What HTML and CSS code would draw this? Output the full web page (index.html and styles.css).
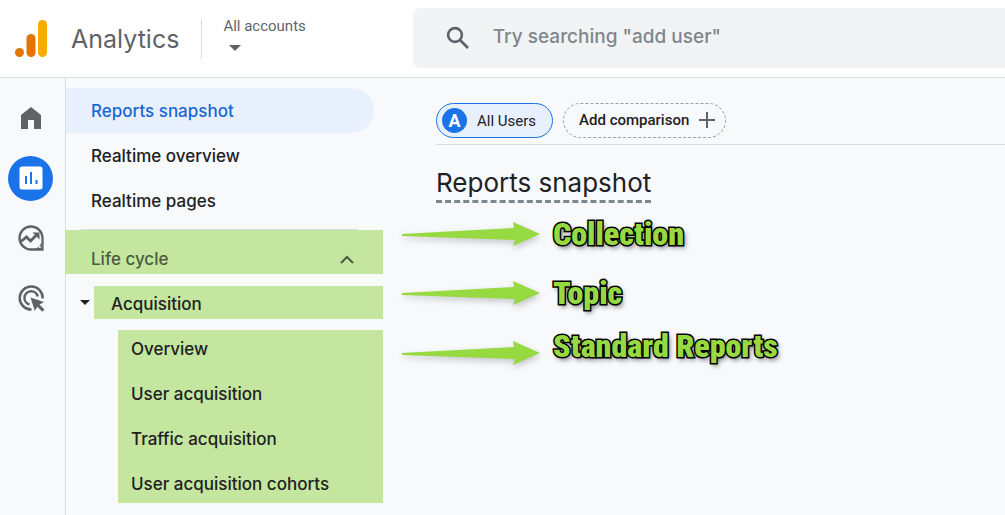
FILE: index.html
```
<!DOCTYPE html>
<html lang="en">
<head>
  <meta charset="UTF-8">
  <title>Analytics</title>
  <link rel="stylesheet" href="styles.css">
</head>
<body>

  <header class="topbar">
    <a class="brand" href="#">
      <svg width="34" height="38" viewBox="0 0 34 38" aria-hidden="true">
        <rect x="23" y="0" width="9" height="37" rx="4.5" fill="#f9ab00"/>
        <rect x="11.500" y="14" width="9" height="23" rx="4.5" fill="#e37400"/>
        <circle cx="4.500" cy="32.500" r="4.500" fill="#e37400"/>
      </svg>
      <span class="brand-name">Analytics</span>
    </a>
    <button class="account" type="button">
      <span>All accounts</span>
      <svg width="12" height="6" viewBox="0 0 12 6" aria-hidden="true"><path d="M0 0h12L6 6z" fill="#5f6368"/></svg>
    </button>
    <label class="search">
      <svg width="24" height="24" viewBox="0 0 24 24" fill="none" stroke="#5f6368" stroke-width="2.600" aria-hidden="true">
        <circle cx="9" cy="9" r="6.900"/>
        <path d="M14 14l8 8"/>
      </svg>
      <input type="search" aria-label="Search" placeholder='Try searching "add user"'>
    </label>
  </header>

  <div class="page">
    <nav class="rail" aria-label="Sections">
      <a href="#" aria-label="Home">
        <svg width="30" height="30" viewBox="0 0 30 30"><path d="M5 12L15 4l10 8v14h-7v-9h-6v9H5z" fill="#5f6368"/></svg>
      </a>
      <a class="active" href="#" aria-label="Reports">
        <svg width="30" height="30" viewBox="0 0 30 30">
          <rect x="3.500" y="3.500" width="23" height="23" rx="2.500" fill="#fff"/>
          <path d="M10 13v8M15 9v12M20.500 17v4" stroke="#1a73e8" stroke-width="2"/>
        </svg>
      </a>
      <a href="#" aria-label="Explore">
        <svg width="30" height="30" viewBox="0 0 30 30" fill="none" stroke="#5f6368" stroke-width="2.300">
          <path d="M15 26.500A11.500 11.500 0 1 1 26.500 15V26.500H15z"/>
          <path d="M5 18.500l5.500-4.500 4 4 7-7" stroke-width="2.800"/>
          <path d="M16.500 9.500h7v7z" fill="#5f6368" stroke="none"/>
          <path d="M25.500 19v7.500H18c3.500-1 6.500-4 7.500-7.500z" fill="#5f6368" stroke="none"/>
          <circle cx="23.700" cy="24" r="1.100" fill="#f8f9fb" stroke="none"/>
        </svg>
      </a>
      <a href="#" aria-label="Advertising">
        <svg width="30" height="30" viewBox="0 0 30 30" fill="none" stroke="#5f6368" stroke-width="2.500">
          <path d="M15.500 26.500A11.500 11.500 0 1 1 26.700 15.500"/>
          <path d="M13.500 21.500A6.700 6.700 0 1 1 21.700 13.500"/>
          <path d="M14.500 14.500l13.500 4.500-4.500 2.500 5 5-2.200 2.200-5-5-2.500 4.300z" fill="#5f6368" stroke="none"/>
        </svg>
      </a>
    </nav>

    <nav class="sidenav" aria-label="Reports">
      <a class="item active" href="#">Reports snapshot</a>
      <a class="item" href="#">Realtime overview</a>
      <a class="item" href="#">Realtime pages</a>
      <hr>
      <button class="collection" type="button">
        <span>Life cycle</span>
        <svg width="14" height="9" viewBox="0 0 14 9" fill="none" stroke="#4c5a42" stroke-width="2" aria-hidden="true"><path d="M1 8l6-6 6 6"/></svg>
      </button>
      <div class="topic">
        <svg width="10" height="5" viewBox="0 0 10 5" aria-hidden="true"><path d="M0 0h10L5 5z" fill="#202124"/></svg>
        <button type="button">Acquisition</button>
      </div>
      <div class="reports">
        <a href="#">Overview</a>
        <a href="#">User acquisition</a>
        <a href="#">Traffic acquisition</a>
        <a href="#">User acquisition cohorts</a>
      </div>
    </nav>

    <main>
      <div class="comparisons">
        <button class="chip all" type="button"><span class="avatar">A</span>All Users</button>
        <button class="chip add" type="button">Add comparison
          <svg width="16" height="16" viewBox="0 0 16 16" stroke="#5f6368" stroke-width="2" aria-hidden="true"><path d="M8 0v16M0 8h16"/></svg>
        </button>
      </div>
      <h1>Reports snapshot</h1>
      <ul class="notes">
        <li>
          <svg class="arrow" width="140" height="26" viewBox="0 0 140 26" aria-hidden="true"><path d="M1 13l112-6-1-6 27 12-27 12 2-6L1 15z"/></svg>
          <span>Collection</span>
        </li>
        <li>
          <svg class="arrow" width="140" height="26" viewBox="0 0 140 26" aria-hidden="true"><path d="M1 13l112-6-1-6 27 12-27 12 2-6L1 15z"/></svg>
          <span>Topic</span>
        </li>
        <li class="low">
          <svg class="arrow" width="140" height="26" viewBox="0 0 140 26" aria-hidden="true"><path d="M1 13l112-6-1-6 27 12-27 12 2-6L1 15z"/></svg>
          <span>Standard Reports</span>
        </li>
      </ul>
    </main>
  </div>

</body>
</html>
```
FILE: styles.css
```
* {
  box-sizing: border-box;
}

body {
  margin: 0;
  min-height: 100vh;
  display: flex;
  flex-direction: column;
  background: #f8f9fb;
  color: #202124;
  font-family: Inter, Roboto, sans-serif;
  font-size: 17px;
}

a {
  color: inherit;
  text-decoration: none;
}

button {
  padding: 0;
  border: 0;
  background: none;
  color: inherit;
  font: inherit;
  text-align: left;
  cursor: pointer;
}

svg {
  display: block;
  flex: none;
}

.topbar {
  display: flex;
  align-items: center;
  height: 78px;
  padding-left: 15px;
  background: #fff;
  border-bottom: 1px solid #dadce0;
}

.brand {
  display: flex;
  align-items: center;
  gap: 22px;
  padding-right: 22px;
  color: #5f6368;
}

.brand-name {
  font-size: 25px;
}

.account {
  display: flex;
  flex-direction: column;
  justify-content: flex-start;
  gap: 12px;
  height: 40px;
  padding-left: 21px;
  border-left: 1px solid #dadce0;
  color: #5f6368;
  font: 15px/14px Roboto, sans-serif;
}

.account svg {
  margin-left: 6px;
}

.search {
  flex: 1;
  align-self: flex-start;
  display: flex;
  align-items: center;
  gap: 23px;
  height: 60px;
  margin: 8px 0 0 107px;
  padding-left: 33px;
  border-radius: 8px 0 0 8px;
  background: #f1f3f4;
}

.search input {
  flex: 1;
  min-width: 0;
  padding: 0 0 4px;
  border: 0;
  outline: 0;
  background: none;
  font: 500 19px Inter, sans-serif;
}

.search input::placeholder {
  color: #80868b;
}

.page {
  flex: 1;
  display: flex;
}

.rail {
  flex: none;
  display: flex;
  flex-direction: column;
  align-items: center;
  gap: 15px;
  width: 66px;
  padding: 18px 4px 0 0;
  border-right: 1px solid #dadce0;
}

.rail a {
  display: grid;
  place-items: center;
  width: 45px;
  height: 45px;
  padding-bottom: 1px;
  border-radius: 50%;
}

.rail .active {
  background: #1a73e8;
}

.sidenav {
  flex: none;
  width: 317px;
  padding-top: 10px;
  font-weight: 500;
}

.item {
  display: flex;
  align-items: center;
  height: 45px;
  margin-right: 9px;
  padding-left: 25px;
  border-radius: 0 23px 23px 0;
}

.item.active {
  background: #e8f0fe;
  color: #1967d2;
}

.sidenav hr {
  margin: 6px 25px 0 15px;
  border: 0;
  border-top: 1px solid #dadce0;
}

.collection {
  display: flex;
  align-items: center;
  justify-content: space-between;
  width: 318px;
  height: 44px;
  margin-left: -1px;
  padding: 14px 29px 0 26px;
  background: #c4e69e;
  color: #4c5a42;
}

.topic {
  display: flex;
  align-items: center;
  gap: 4px;
  margin: 12px 0 11px;
  padding-left: 14px;
}

.topic button {
  flex: 1;
  height: 33px;
  padding: 2px 0 0 17px;
  background: #c4e69e;
}

.reports {
  display: flex;
  flex-direction: column;
  gap: 8px;
  margin-left: 52px;
  padding: 1px 0 0 13px;
  background: #c4e69e;
}

.reports a {
  line-height: 37px;
}

main {
  flex: 1;
  min-width: 0;
  padding: 25px 0 0 53px;
}

.comparisons {
  display: flex;
  gap: 10px;
  padding-bottom: 6px;
  border-bottom: 1px solid #dadce0;
}

.chip {
  display: flex;
  align-items: center;
  height: 35px;
  border-radius: 18px;
  font: 15px Roboto, sans-serif;
}

.chip.all {
  gap: 10px;
  padding: 0 16px 0 5px;
  border: 1px solid #1a73e8;
  background: #e8f0fe;
}

.avatar {
  width: 25px;
  border-radius: 50%;
  background: #1a73e8;
  color: #fff;
  font-size: 18px;
  font-weight: 700;
  line-height: 25px;
  text-align: center;
}

.chip.add {
  gap: 10px;
  padding: 0 10px 2px 15px;
  border: 1px dashed #9aa0a6;
  font-weight: 500;
}

h1 {
  width: fit-content;
  margin: 21px 0 0;
  border-bottom: 3px dashed #80868b;
  font-size: 26px;
  font-weight: 400;
  line-height: 34px;
}

.notes {
  margin: 11px 0 0 -35px;
  padding: 0;
  list-style: none;
}

.notes li {
  display: flex;
  align-items: center;
  gap: 12px;
  margin-bottom: 19px;
}

.notes .low {
  align-items: flex-end;
  margin-top: -6px;
}

.notes span {
  color: #96d940;
  font: 900 32px/40px "Roboto Condensed", "Liberation Sans Narrow", sans-serif;
  -webkit-text-stroke: 3px #000;
  paint-order: stroke fill;
  text-shadow: 2px 3px 5px #0008;
}

.arrow {
  fill: #96d940;
  filter: drop-shadow(1px 3px 3px #0003);
}
```
